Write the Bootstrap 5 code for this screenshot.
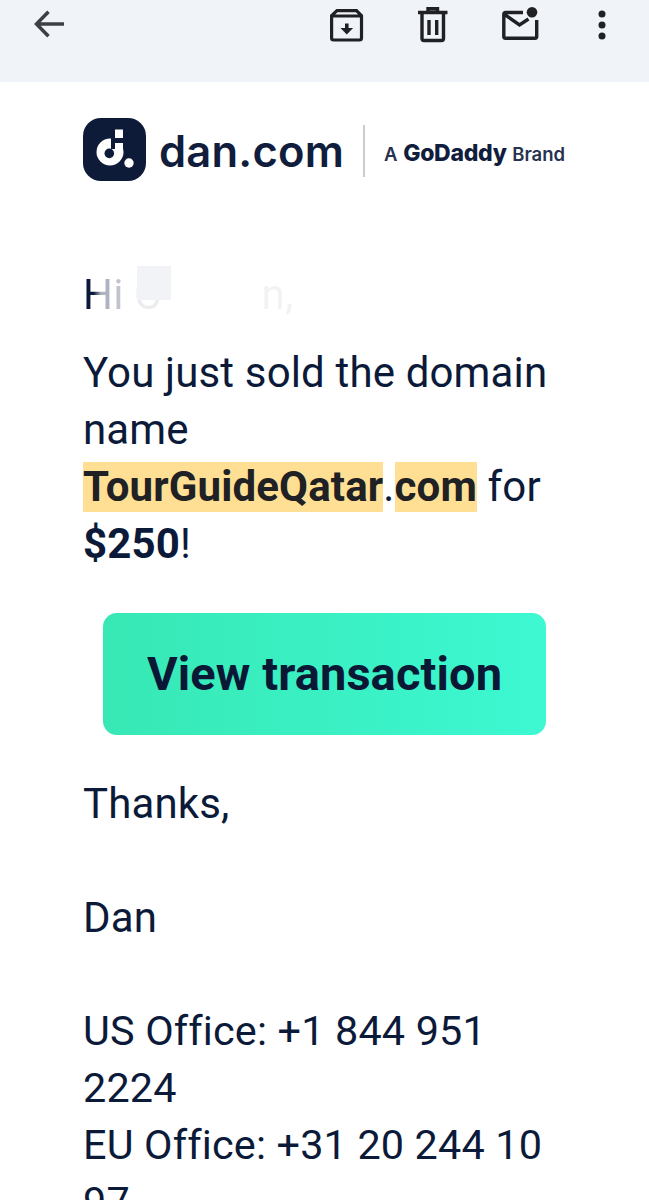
<!DOCTYPE html>
<html lang="en">
<head>
  <meta charset="UTF-8" />
  <meta name="viewport" content="width=device-width, initial-scale=1.0"/>
  <title>Email</title>
  <link href="https://cdn.jsdelivr.net/npm/bootstrap@5.3.0/dist/css/bootstrap.min.css" rel="stylesheet">
  <style>
    html, body { height: 1200px; overflow: hidden; }
    body { font-family: Roboto, sans-serif; color: #0c1a3a; background: #fff; }
    .mail-bar { height: 82px; background: #f0f3f8; padding: 0 38px 0 33px; }
    .bar-actions { gap: 54px; }
    .bar-icon { margin-top: 7px; }
    .bar-back { margin-top: 10px; }
    .mail-body { padding: 0 95px 0 83px; font-size: 42px; line-height: 57px; letter-spacing: .15px; }
    .logo-row { padding-top: 36px; height: 184px; white-space: nowrap; }
    .logo-word { font-family: Inter, sans-serif; font-weight: 600; font-size: 43.5px; line-height: 66px; letter-spacing: .2px; color: #111d3c; margin-left: 13px; }
    .logo-sep { width: 2px; height: 52px; background: #c9ccd1; margin: 7px 19px 0 19px; flex-shrink: 0; }
    .logo-tag { font-family: Inter, sans-serif; font-size: 18.5px; font-weight: 600; color: #26324f; letter-spacing: 0; line-height: 70px; }
    .logo-tag b { font-size: 23px; font-weight: 800; color: #111d3c; margin: 0 1px; letter-spacing: -.3px; }
    .greet { position: relative; margin-bottom: 21px; }
    .greet-h { background: linear-gradient(90deg, #0c1a3a 35%, #aeb3bf 60%); -webkit-background-clip: text; background-clip: text; color: transparent; }
    .greet .fade1 { opacity: .25; }
    .greet .fade2 { opacity: .08; }
    .greet .name-tail { opacity: .05; margin-left: 100px; }
    .name-patch { position: absolute; left: 54px; top: 0; width: 34px; height: 34px; background: #f2f3f6; }
    .domain { background: #fedf93; color: #202124; font-weight: 700; padding-bottom: 1px; }
    .cta-wrap { padding: 41px 0 40px 20px; }
    .cta-btn { display: block; width: 443px; height: 122px; line-height: 122px; padding: 0; border: 0; border-radius: 14px; background: linear-gradient(90deg, #37e8b4, #3df8d2); color: #0a1836; font-size: 47px; font-weight: 700; letter-spacing: .1px; }
    .cta-btn:hover { background: linear-gradient(90deg, #37e8b4, #3df8d2); color: #0a1836; }
    .block-gap { margin-top: 57px; }
    .office-lines { font-size: 41.4px; }
  </style>
</head>
<body>
  <div class="mail-bar d-flex justify-content-between align-items-start">
    <svg class="bar-back" width="32" height="28" viewBox="0 0 32 28" fill="none" stroke="#3c4043" stroke-width="3.500"><path d="M31 14H5M15.500 1.700 3.500 14l12 12.300"/></svg>
    <div class="bar-actions d-flex align-items-start">
      <!-- archive -->
      <svg class="bar-icon" width="34" height="36" viewBox="0 0 34 36" fill="none" stroke="#202124" stroke-width="3.200"><path d="M7 3.600h19.500l5 5V31a2 2 0 0 1-2 2H3.600a2 2 0 0 1-2-2V8.600zM2 9h30"/><path d="M16.800 16.500v6" stroke-width="3.600"/><path d="M10.500 21h12.600l-6.300 6.500z" fill="#202124" stroke="none"/></svg>
      <!-- trash -->
      <svg class="bar-icon" width="30" height="36" viewBox="0 0 30 36" fill="none" stroke="#202124" stroke-width="3.400"><path d="M0 5.500h29.500M10 5V1.800h9.500V5M4 6v25.500a2 2 0 0 0 2 2h17.500a2 2 0 0 0 2-2V6M11 13v15M18.700 13v15"/></svg>
      <!-- mail with dot -->
      <svg class="bar-icon" width="37" height="36" viewBox="0 0 37 36" fill="none" stroke="#202124" stroke-width="3.400"><path d="M21 5.500H3.500a1.700 1.700 0 0 0-1.700 1.700V29.500a1.700 1.700 0 0 0 1.700 1.700H33a1.700 1.700 0 0 0 1.700-1.700V13M2 7l15.500 11 9-6"/><circle cx="30" cy="5.300" r="5.300" fill="#202124" stroke="none"/></svg>
      <!-- overflow menu -->
      <svg class="bar-icon" width="18" height="36" viewBox="0 0 18 36" fill="#202124"><circle cx="9" cy="7" r="3.500"/><circle cx="9" cy="18" r="3.500"/><circle cx="9" cy="29" r="3.500"/></svg>
    </div>
  </div>

  <div class="mail-body">
    <div class="logo-row d-flex align-items-start">
      <svg width="63" height="63" viewBox="0 0 63 63" class="flex-shrink-0">
        <rect width="63" height="63" rx="18" fill="#0d1b38"/>
        <circle cx="27" cy="34" r="13.500" fill="#fff"/>
        <rect x="31" y="19" width="10" height="6" fill="#0d1b38"/>
        <rect x="32" y="25" width="8" height="9" fill="#fff"/>
        <circle cx="26.300" cy="35.400" r="4.800" fill="#0d1b38"/>
        <path d="M28 20h4v11h-4z" fill="#0d1b38"/>
        <rect x="32" y="11.500" width="8" height="8.500" fill="#fff"/>
        <circle cx="46" cy="45" r="4.700" fill="#fff"/>
      </svg>
      <span class="logo-word">dan.com</span>
      <span class="logo-sep"></span>
      <span class="logo-tag">A <b>GoDaddy</b> Brand</span>
    </div>

    <div class="greet"><span class="greet-h">H</span><span class="fade1">i</span> <span class="fade2">C</span><span class="name-tail">n,</span><span class="name-patch"></span></div>
    <div>You just sold the domain name <span class="domain">TourGuideQatar</span>.<span class="domain">com</span> for <strong>$250</strong>!</div>

    <div class="cta-wrap">
      <a href="#" class="btn cta-btn">View transaction</a>
    </div>

    <div>Thanks,</div>
    <div class="block-gap">Dan</div>
    <div class="block-gap office-lines">US Office: +1 844 951 2224<br>EU Office: +31 20 244 10 97</div>
  </div>
</body>
</html>
